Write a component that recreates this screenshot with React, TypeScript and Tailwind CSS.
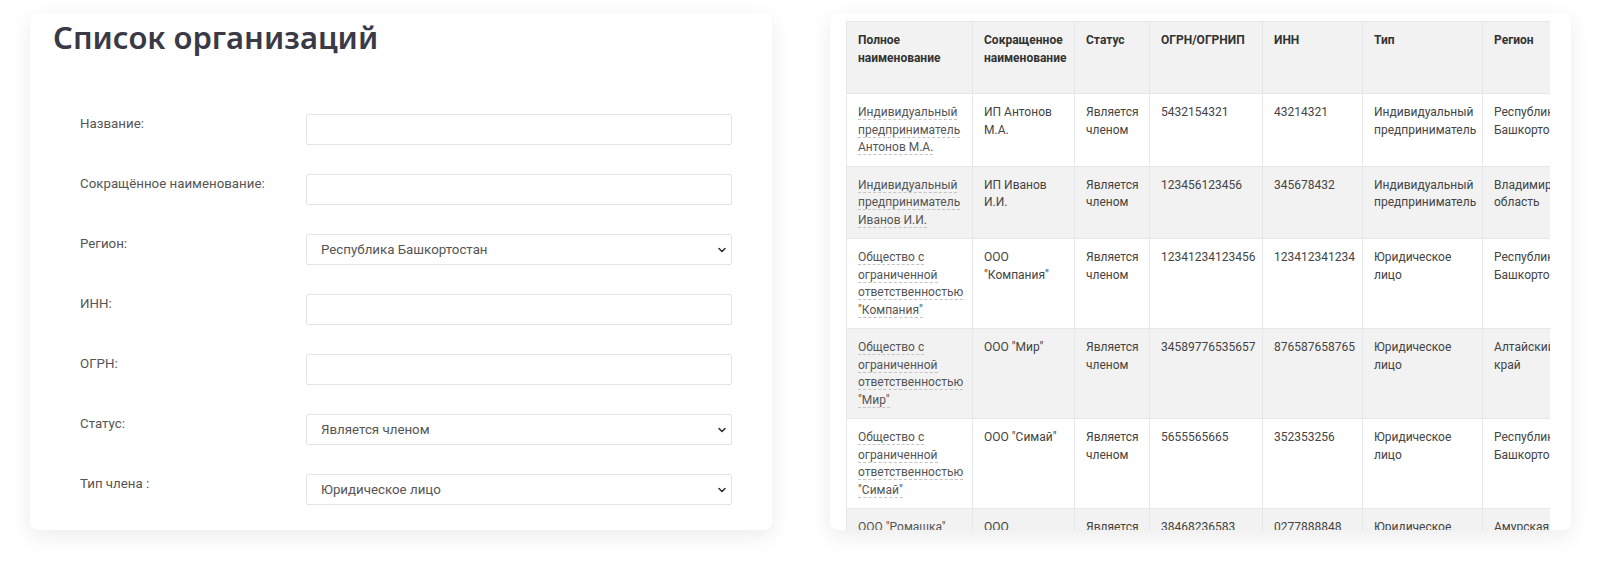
import React from 'react';

type Row = {
  full: string;
  short: string;
  status: string;
  ogrn: string;
  inn: string;
  type: string;
  region: string;
};

const rows: Row[] = [
  { full: 'Индивидуальный предприниматель Антонов М.А.', short: 'ИП Антонов М.А.', status: 'Является членом', ogrn: '5432154321', inn: '43214321', type: 'Индивидуальный предприниматель', region: 'Республика Башкортостан' },
  { full: 'Индивидуальный предприниматель Иванов И.И.', short: 'ИП Иванов И.И.', status: 'Является членом', ogrn: '123456123456', inn: '345678432', type: 'Индивидуальный предприниматель', region: 'Владимирская область' },
  { full: 'Общество с ограниченной ответственностью "Компания"', short: 'ООО "Компания"', status: 'Является членом', ogrn: '12341234123456', inn: '123412341234', type: 'Юридическое лицо', region: 'Республика Башкортостан' },
  { full: 'Общество с ограниченной ответственностью "Мир"', short: 'ООО "Мир"', status: 'Является членом', ogrn: '34589776535657', inn: '876587658765', type: 'Юридическое лицо', region: 'Алтайский край' },
  { full: 'Общество с ограниченной ответственностью "Симай"', short: 'ООО "Симай"', status: 'Является членом', ogrn: '5655565665', inn: '352353256', type: 'Юридическое лицо', region: 'Республика Башкортостан' },
  { full: 'ООО "Ромашка"', short: 'ООО "Ромашка"', status: 'Является членом', ogrn: '38468236583', inn: '0277888848', type: 'Юридическое лицо', region: 'Амурская область' },
];

const headers = ['Полное наименование', 'Сокращенное наименование', 'Статус', 'ОГРН/ОГРНИП', 'ИНН', 'Тип', 'Регион'];
const widths = [126, 102, 75, 113, 100, 120, 120];

function Chevron() {
  return (
    <svg className="pointer-events-none absolute right-[6px] top-1/2 -translate-y-1/2" width="8" height="6" viewBox="0 0 8 6" fill="none">
      <path d="M1 1.5 L4 4.5 L7 1.5" stroke="#333" strokeWidth="1.6" strokeLinecap="round" strokeLinejoin="round" />
    </svg>
  );
}

function Field({ label, value, select }: { label: string; value?: string; select?: boolean }) {
  return (
    <div className="flex items-start">
      <label className="w-[226px] shrink-0 text-[13.3px] leading-[20px] text-[#555]">{label}</label>
      <div className="relative flex-1">
        {select ? (
          <>
            <select className="block h-[31px] w-full appearance-none rounded-[2px] border border-[#e4e4e4] bg-white pl-[14px] text-[13.3px] text-[#555] outline-none">
              <option>{value}</option>
            </select>
            <Chevron />
          </>
        ) : (
          <input className="block h-[31px] w-full rounded-[2px] border border-[#e4e4e4] bg-white px-[14px] text-[13.3px] text-[#555] outline-none" />
        )}
      </div>
    </div>
  );
}

export default function App() {
  return (
    <div className="flex min-h-[580px] gap-[58px] bg-white pl-[30px] pr-[27px] pt-[13px] font-[Roboto,sans-serif]">
      {/* Filter form */}
      <div className="h-[517px] w-[742px] shrink-0 rounded-lg bg-white pl-[23px] pr-[40px] pt-[6px] shadow-[0_6px_22px_rgba(0,0,0,0.08)]">
        <h1 className="font-['Noto_Sans',sans-serif] text-[31px] font-semibold leading-[37px] text-[#3a3a47]">
          Список организаций
        </h1>
        <div className="mt-[58px] flex flex-col gap-[29px] pl-[27px]">
          <Field label="Название:" />
          <Field label="Сокращённое наименование:" />
          <Field label="Регион:" value="Республика Башкортостан" select />
          <Field label="ИНН:" />
          <Field label="ОГРН:" />
          <Field label="Статус:" value="Является членом" select />
          <Field label="Тип члена :" value="Юридическое лицо" select />
        </div>
      </div>

      {/* Organisations table */}
      <div className="h-[517px] w-[741px] shrink-0 overflow-hidden rounded-lg bg-white pl-[16px] pt-[8px] shadow-[0_6px_22px_rgba(0,0,0,0.08)]">
        <div className="w-[704px] overflow-hidden">
          <table className="table-fixed border-collapse" style={{ width: widths.reduce((a, b) => a + b, 0) }}>
            <colgroup>
              {widths.map((w, i) => (
                <col key={i} style={{ width: w }} />
              ))}
            </colgroup>
            <thead>
              <tr className="bg-[#f2f2f2]">
                {headers.map((h) => (
                  <th key={h} className="h-[72px] border border-[#e5e7ea] px-[11px] pt-[10px] text-left align-top text-[12px] font-bold leading-[17.5px] text-[#333]">
                    {h}
                  </th>
                ))}
              </tr>
            </thead>
            <tbody>
              {rows.map((r, i) => (
                <tr key={i} className={i % 2 === 1 ? 'bg-[#f2f2f2]' : 'bg-white'}>
                  <td className="border border-[#e5e7ea] px-[11px] pb-[9px] pt-[10px] align-top text-[12px] leading-[17.5px] text-[#555]">
                    <span className="border-b border-dashed border-[#c4c4c4]">{r.full}</span>
                  </td>
                  {[r.short, r.status, r.ogrn, r.inn, r.type, r.region].map((v, j) => (
                    <td key={j} className="border border-[#e5e7ea] px-[11px] pb-[9px] pt-[10px] align-top text-[12px] leading-[17.5px] text-[#444]">
                      {j === 5 ? (
                        <div className="whitespace-nowrap">
                          {v.split(' ').map((w, k) => (
                            <div key={k}>{w}</div>
                          ))}
                        </div>
                      ) : (
                        v
                      )}
                    </td>
                  ))}
                </tr>
              ))}
            </tbody>
          </table>
        </div>
      </div>
    </div>
  );
}
